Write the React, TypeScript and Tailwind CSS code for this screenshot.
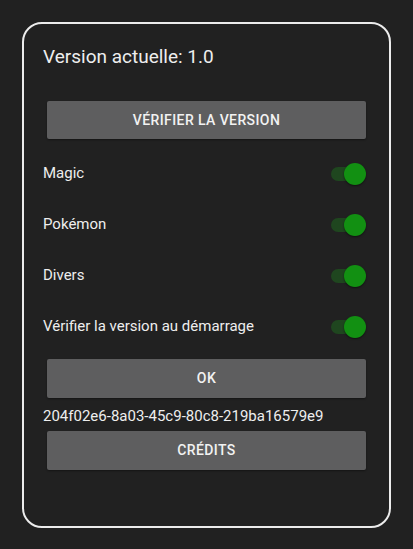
import React from "react";

const TOGGLES = ["Magic", "Pokémon", "Divers", "Vérifier la version au démarrage"];

function Switch() {
  return (
    <div className="relative w-[35px] h-[22px] shrink-0">
      <div className="absolute left-0 top-[4px] w-[32px] h-[14px] rounded-full bg-[#1f461f]" />
      <div className="absolute right-0 top-0 w-[22px] h-[22px] rounded-full bg-[#129012] shadow-[0_1px_2px_rgba(0,0,0,0.5)]" />
    </div>
  );
}

function Button({ label }: { label: string }) {
  return (
    <button
      type="button"
      className="mx-[4px] w-[319px] flex items-center justify-center rounded-[2px] bg-[#5e5e5f] text-[14px] font-medium tracking-[0.4px] text-[#f2f2f2] shadow-[0_1px_2px_rgba(0,0,0,0.4)]"
    >
      {label}
    </button>
  );
}

export default function App() {
  return (
    <div
      className="w-[413px] h-[549px] bg-[#212121] pt-[22px] px-[22px]"
      style={{ fontFamily: "Roboto, 'Liberation Sans', sans-serif" }}
    >
      <div className="w-[369px] h-[506px] border-2 border-[#ececec] rounded-[20px] px-[19px] pt-[21px] flex flex-col text-[#eeeeee]">
        <p className="text-[19px] leading-[24px]">Version actuelle: 1.0</p>

        <div className="mt-[32px] h-[38px] flex">
          <Button label="VÉRIFIER LA VERSION" />
        </div>

        <div className="mt-[9px] flex flex-col">
          {TOGGLES.map((t) => (
            <div key={t} className="h-[51px] flex items-center justify-between pr-[4px]">
              <span className="text-[15px]">{t}</span>
              <Switch />
            </div>
          ))}
        </div>

        <div className="mt-[7px] h-[39px] flex">
          <Button label="OK" />
        </div>

        <p className="mt-[8px] text-[15px] leading-[20px]">204f02e6-8a03-45c9-80c8-219ba16579e9</p>

        <div className="mt-[5px] h-[39px] flex">
          <Button label="CRÉDITS" />
        </div>
      </div>
    </div>
  );
}
